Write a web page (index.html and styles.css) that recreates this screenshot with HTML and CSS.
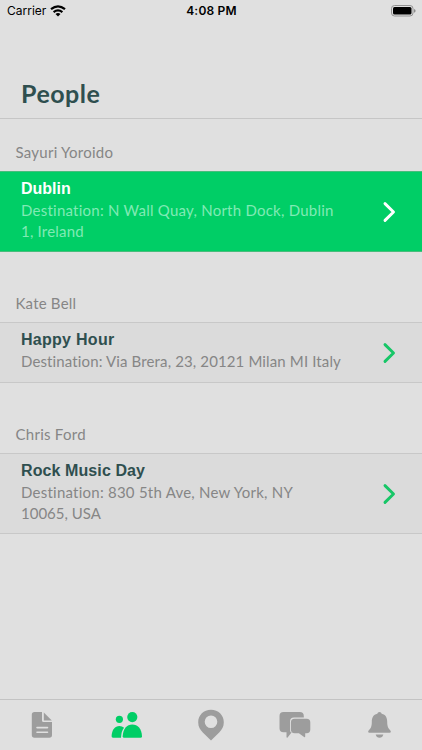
FILE: index.html
```
<!DOCTYPE html>
<html lang="en">
<head>
<meta charset="utf-8">
<title>People</title>
<link rel="stylesheet" href="styles.css">
</head>
<body>
<div class="status">
  <div class="carrier"><span>Carrier</span>
    <svg width="16" height="12" viewBox="0 0 16 12"><g fill="none" stroke="#000" stroke-width="2.2"><path d="M1 4.2Q8-1.6 15 4.2"/><path d="M3.6 7.2Q8 3.7 12.4 7.2"/></g><path d="M5.5 8.9Q8 7.1 10.500 8.900L8 11.500Z"/></svg>
  </div>
  <div class="time">4:08 PM</div>
  <svg class="battery" width="25" height="12" viewBox="0 0 25 12"><rect x=".5" y=".5" width="21.500" height="10.500" rx="3" fill="none" stroke="#929292"/><rect x="2" y="2" width="18.500" height="7.500" rx="1.500"/><path d="M23.200 4v3.700q1.300-.5 1.300-1.850T23.200 4Z" fill="#777"/></svg>
</div>
<header class="header"><h1>People</h1></header>
<main class="list">
  <section>
    <h2 class="sayuri">Sayuri Yoroido</h2>
    <article class="card active tall">
      <div class="info"><h3 class="dublin">Dublin</h3><p><span class="d1">Destination: N Wall Quay, North Dock, Dublin</span><br><span class="d2">1, Ireland</span></p></div>
      <svg class="chevron" width="14" height="22" viewBox="0 0 14 22"><path d="M3 2.600 11.500 11 3 19.400"/></svg>
    </article>
  </section>
  <section>
    <h2 class="kate">Kate Bell</h2>
    <article class="card">
      <div class="info"><h3 class="happy">Happy Hour</h3><p><span class="d3">Destination: Via Brera, 23, 20121 Milan MI Italy</span></p></div>
      <svg class="chevron" width="14" height="22" viewBox="0 0 14 22"><path d="M3 2.600 11.500 11 3 19.400"/></svg>
    </article>
  </section>
  <section>
    <h2 class="chris">Chris Ford</h2>
    <article class="card tall">
      <div class="info"><h3 class="rock">Rock Music Day</h3><p><span class="d4">Destination: 830 5th Ave, New York, NY</span><br><span class="d5">10065, USA</span></p></div>
      <svg class="chevron" width="14" height="22" viewBox="0 0 14 22"><path d="M3 2.600 11.500 11 3 19.400"/></svg>
    </article>
  </section>
</main>
<nav class="tabs">
  <a><svg width="34" height="34" viewBox="0 0 34 34"><path d="M9.500 4H17v8.500a1.500 1.500 0 0 0 1.500 1.500H27v13a2.700 2.700 0 0 1-2.700 2.700H9.500A2.700 2.700 0 0 1 6.800 27V6.700A2.700 2.700 0 0 1 9.500 4Z"/><path d="M18.800 4.400 26.800 12.600H18.800Z"/><path class="cut" d="M12 19.600h10.500M12 24.300h10.500"/></svg></a>
  <a class="on"><svg width="34" height="34" viewBox="0 0 34 34"><circle cx="9.400" cy="11.300" r="3.600"/><path d="M1.600 28.300C1.900 21.500 5 17.900 9.400 17.900q2.800 0 4.700 1.800Q11.400 22.500 11 29.700H3Q1.600 29.700 1.600 28.300Z"/><circle cx="22.300" cy="9.100" r="5.100"/><path d="M12.700 28.200C13.100 21 16.800 16.600 22.300 16.600S31.700 21 32 28.200Q32 29.700 30.500 29.700H14.200Q12.700 29.700 12.700 28.200Z"/></svg></a>
  <a><svg width="34" height="34" viewBox="0 0 34 34"><path fill-rule="evenodd" d="M17 1.800c7.300 0 12.800 5.400 12.800 12.400 0 4.600-1.900 7.300-4.600 10.200L17 32.500 8.800 24.400C6.100 21.500 4.200 18.800 4.200 14.200 4.200 7.200 9.700 1.800 17 1.800Zm0 5.700a6.300 6.300 0 1 0 0 12.600 6.300 6.300 0 0 0 0-12.600Z"/></svg></a>
  <a><svg width="34" height="34" viewBox="0 0 34 34"><path d="M5.500 4h16.300q4 0 4 4v1.500H16q-4 0-4 4v8q0 1.500.6 2.800h1.100L9.600 29.500q-1.100.6-1.100-.8v-4.400h-3Q1.500 24.300 1.500 20.300V8q0-4 4-4Z"/><path d="M16.600 10.800h12q3.700 0 3.700 3.700v7q0 3.700-3.700 3.700H27.200v3.300q0 1.200-1.100.5l-5.200-3.800H16.600q-3.700 0-3.700-3.700v-7q0-3.700 3.700-3.700Z"/></svg></a>
  <a><svg width="34" height="34" viewBox="0 0 34 34"><path d="M16.500 3.900q1.900 0 2.200 1.800c4 .9 5.500 4 5.500 8 0 4.700 1 6.400 3 8.600q1.600 2.400-.6 2.400H6.400q-2.200 0-.6-2.400c2-2.200 3-3.900 3-8.600 0-4 1.500-7.100 5.500-8Q14.600 3.900 16.500 3.900Z"/><path d="M12.700 26.600h7.600q-.8 3.200-3.800 3.200t-3.800-3.200Z"/></svg></a>
</nav>
</body>
</html>
```
FILE: styles.css
```
* { box-sizing: border-box; }
body {
  margin: 0;
  width: 422px;
  height: 750px;
  overflow: hidden;
  display: flex;
  flex-direction: column;
  background: #e0e0e0;
  font-family: Lato, sans-serif;
  color: #868686;
}
h1, h2, h3, p { margin: 0; }
svg { display: block; flex: none; }
.status {
  height: 22px;
  padding: 0 6px 0 7px;
  display: grid;
  grid-template-columns: 1fr auto 1fr;
  align-items: center;
  font: 12px/22px Inter, sans-serif;
  color: #000;
}
.carrier { display: flex; align-items: center; gap: 4px; }
.carrier span { letter-spacing: 0; }
.time { font-weight: 600; letter-spacing: 0.2px; }
.battery { justify-self: end; }
.header {
  height: 97px;
  padding: 53px 21px 0;
  border-bottom: 1px solid #c6c6c6;
}
h1 {
  font-size: 25px;
  line-height: 36px;
  font-weight: 700;
  letter-spacing: 0.5px;
  color: #2f4f4f;
}
.list { flex: 1; padding-top: 16px; }
h2 {
  height: 36px;
  padding: 0 15.5px;
  font-size: 15px;
  line-height: 34px;
  font-weight: 400;
}
section + section { margin-top: 34px; }
.card {
  height: 61px;
  padding: 6px 26px 0 21px;
  display: flex;
  justify-content: space-between;
  background: #dbdbdb;
  border: solid #c8c8c8;
  border-width: 1px 0;
}
.card.tall { height: 81px; }
.card.active { background: #00ce66; border-color: #48bd7c; color: #80eab5; }
h3 {
  font: bold 16px/22px "Liberation Sans", sans-serif;
  color: #2f4f4f;
}
.active h3 { color: #fff; }
p { font-size: 15px; line-height: 20.5px; white-space: nowrap; }
.sayuri, .chris { letter-spacing: 0.26px; }
.kate { letter-spacing: 0.2px; }
.happy { letter-spacing: 0.28px; }
.rock { letter-spacing: 0.1px; }
.d1, .d4 { letter-spacing: 0.24px; }
.d2 { letter-spacing: 0.2px; }
.d3 { letter-spacing: 0.13px; }
.chevron {
  align-self: center;
  margin-top: -6px;
  fill: none;
  stroke: #17c667;
  stroke-width: 2.9;
  stroke-linecap: round;
  stroke-linejoin: round;
}
.active .chevron { stroke: #fff; }
.tabs {
  height: 51px;
  display: grid;
  grid-template-columns: repeat(5, 1fr);
  justify-items: center;
  padding-top: 8px;
  border-top: 1px solid #c3c3c3;
  fill: #9d9d9d;
}
.tabs .on { fill: #00ce66; }
.cut { stroke: #e0e0e0; stroke-width: 1.6; stroke-linecap: round; }
```
